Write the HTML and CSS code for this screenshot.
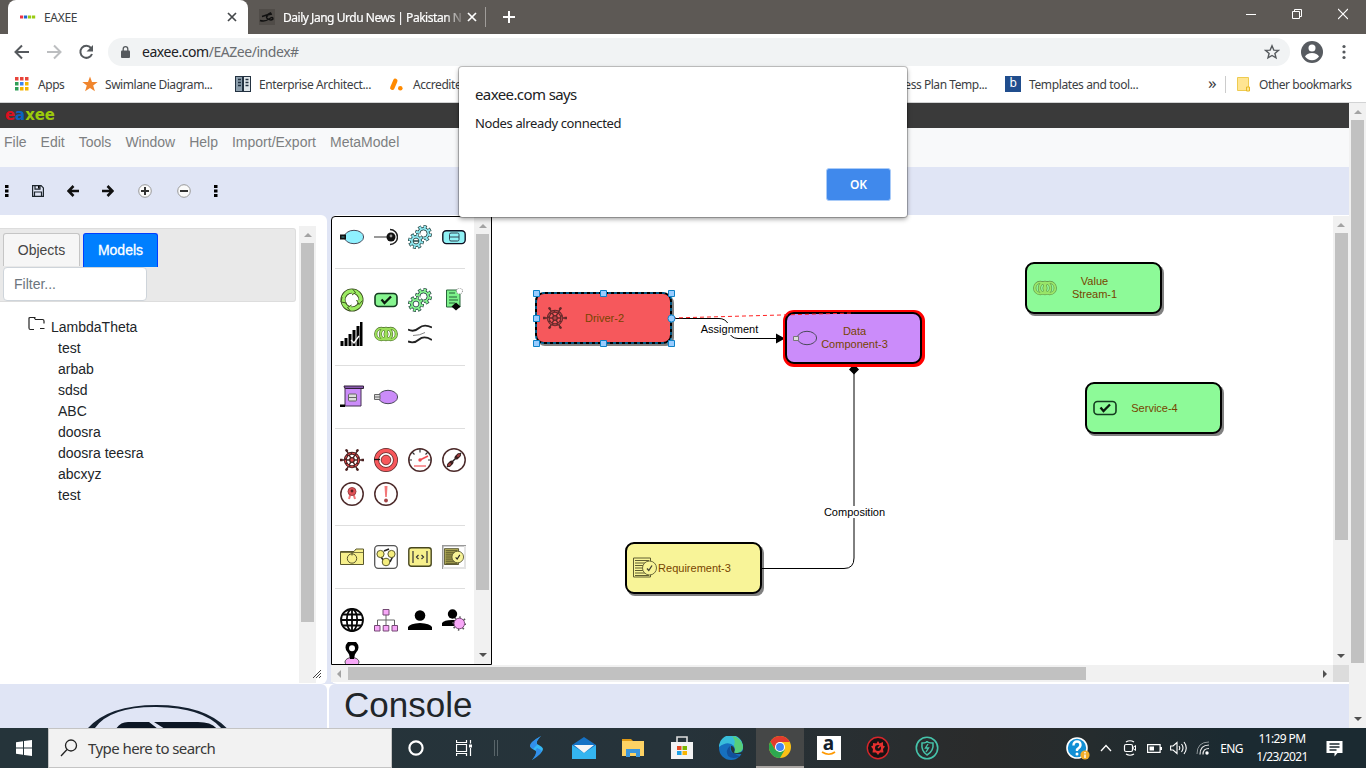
FILE: index.html
```html
<!DOCTYPE html>
<html lang="en">
<head>
<meta charset="utf-8">
<title>EAXEE</title>
<link rel="stylesheet" href="styles.css">
</head>
<body>
<svg class="defs" width="0" height="0">
  <defs>
    <symbol id="gears" viewBox="0 0 24 24">
      <g fill="none">
        <circle cx="15.500" cy="8.500" r="6.800" pathLength="80" stroke="#2b4a48" stroke-width="3.400" stroke-dasharray="6 4"/>
        <circle cx="15.500" cy="8.500" r="6" fill="currentColor" stroke="#2b4a48" stroke-width="1"/>
        <circle cx="15.500" cy="8.500" r="6.400" pathLength="80" stroke="currentColor" stroke-width="2.600" stroke-dasharray="4 6" stroke-dashoffset="-1"/>
        <circle cx="15.500" cy="8.500" r="3.600" fill="#fff" stroke="#2b4a48" stroke-width=".9"/>
        <circle cx="8" cy="16" r="8.200" fill="#fff" stroke="none"/>
        <circle cx="8" cy="16" r="6.300" pathLength="80" stroke="#2b4a48" stroke-width="3.400" stroke-dasharray="6 4"/>
        <circle cx="8" cy="16" r="5.500" fill="currentColor" stroke="#2b4a48" stroke-width="1"/>
        <circle cx="8" cy="16" r="5.900" pathLength="80" stroke="currentColor" stroke-width="2.600" stroke-dasharray="4 6" stroke-dashoffset="-1"/>
        <circle cx="8" cy="16" r="2.900" fill="#fff" stroke="#2b4a48" stroke-width=".9"/>
      </g>
    </symbol>
    <symbol id="capsule" viewBox="0 0 24 24">
      <ellipse cx="14" cy="12" rx="9.600" ry="6.700" fill="currentColor" stroke="#4a4a5a"/>
    </symbol>
    <symbol id="wheel" viewBox="0 0 24 24">
      <g fill="none" stroke="#4a2222">
        <path d="M0 12h24M6 1.500l12 21M18 1.500l-12 21" stroke-width="1.500"/>
        <path d="M0 12h2.500M21.500 12H24M6 1.500l1.300 2.200M18 22.500l-1.300-2.200M18 1.500l-1.300 2.200M6 22.500l1.300-2.200" stroke-width="2.400"/>
        <circle cx="12" cy="12" r="6.700" stroke-width="3"/>
        <circle cx="12" cy="12" r="6.700" stroke="currentColor" stroke-width="1.100" stroke-dasharray="3 1.500"/>
        <circle cx="12" cy="12" r="2.300" fill="currentColor" stroke-width="1.300"/>
      </g>
    </symbol>
    <symbol id="service" viewBox="0 0 24 24">
      <rect x="1" y="5.500" width="22" height="13" rx="3.500" fill="currentColor" stroke="#143c20" stroke-width="1.600"/>
      <path d="M7.500 11.500l3 3.500 6.500-6.500" fill="none" stroke="#0b1a0e" stroke-width="2.300"/>
    </symbol>
    <symbol id="rings" viewBox="0 0 24 24">
      <g fill="none" stroke="#507030" stroke-width="3.200"><circle cx="7.300" cy="12" r="5.600"/><circle cx="12" cy="12" r="5.600"/><circle cx="16.700" cy="12" r="5.600"/></g>
      <g fill="none" stroke="#9de05a" stroke-width="1.900"><circle cx="7.300" cy="12" r="5.600"/><circle cx="12" cy="12" r="5.600"/><circle cx="16.700" cy="12" r="5.600"/></g>
    </symbol>
    <symbol id="requirement" viewBox="0 0 24 24">
      <path d="M.5 2h17v19H.5z" fill="currentColor" stroke="#44421f" stroke-width="1"/>
      <path d="M2 4.500h14M2 7h12M2 9.500h9M2 12h8M2 14.500h9M2 17h11M2 19.500h14" stroke="#44421f" stroke-width="1.100"/>
      <circle cx="16.500" cy="12" r="7" fill="#f7f397" stroke="#55532c"/>
      <path d="M14 12.500l1.800 2 3.200-5" fill="none" stroke="#222" stroke-width="1.300"/>
    </symbol>
  </defs>
</svg>

<header class="tabstrip">
  <div class="tab active">
    <svg width="16" height="16"><g stroke-width="3" stroke-dasharray="3.200 .8"><path d="M0 8h4" stroke="#e34"/><path d="M4 8h4" stroke="#26c"/><path d="M8 8h8" stroke="#9c1"/></g></svg>
    <span class="tab-title">EAXEE</span>
    <svg class="close" width="10" height="10"><path d="M1 1l8 8M9 1L1 9" stroke="#45484b" stroke-width="1.700"/></svg>
  </div>
  <div class="tab">
    <svg width="16" height="16"><path fill="#504c48" d="M0 0h16v16H0z"/><path d="M1 11.500q5 1.500 9-1.500 4-3 4 0-2 2-5 0-3-2 0-3.500M3 7.500q5-1 9-4M8 6l5-1" fill="none" stroke="#111" stroke-width="1.400"/></svg>
    <span class="tab-title fade">Daily Jang Urdu News | Pakistan N</span>
    <svg class="close" width="10" height="10"><path d="M1 1l8 8M9 1L1 9" stroke="#fff" stroke-width="1.700"/></svg>
  </div>
  <svg class="newtab" width="12" height="12"><path d="M6 0v12M0 6h12" stroke="#fff" stroke-width="2"/></svg>
  <div class="winctl">
    <svg width="10" height="12"><path d="M0 6.500h10" stroke="#fff"/></svg>
    <svg width="10" height="12"><path d="M.5 3.500h7v7h-7zM2.500 3.500v-2h7v7h-2" fill="none" stroke="#fff"/></svg>
    <svg width="10" height="12"><path d="M0 1l10 10M10 1L0 11" stroke="#fff" stroke-width="1.100"/></svg>
  </div>
</header>

<div class="navbar">
  <svg width="16" height="16"><path d="M15 8H2M8 1.500L1.500 8 8 14.500" fill="none" stroke="#55595d" stroke-width="2"/></svg>
  <svg width="16" height="16"><path d="M1 8h13M8 1.500L14.500 8 8 14.500" fill="none" stroke="#bcbec0" stroke-width="2"/></svg>
  <svg width="16" height="16"><path d="M13 4A6 6 0 1 0 14 10" fill="none" stroke="#55595d" stroke-width="2"/><path d="M15 1v6.500H8.500z" fill="#55595d"/></svg>
  <div class="omnibox">
    <svg width="10" height="12"><path d="M1 4.500h7q1 0 1 1V11q0 1-1 1H1q-1 0-1-1V5.500q0-1 1-1z" fill="#55595d"/><path d="M2.200 5V3a2.300 2.300 0 0 1 4.600 0v2" fill="none" stroke="#55595d" stroke-width="1.300"/></svg>
    <span class="url"><b>eaxee.com</b>/EAZee/index#</span>
    <svg width="16" height="16"><path d="M8 1.800l1.800 4.300 4.600.3-3.500 3 1.100 4.500L8 11.500 4 13.900l1.100-4.500-3.500-3 4.600-.3z" fill="none" stroke="#55595d" stroke-width="1.400"/></svg>
  </div>
  <svg width="22" height="22"><circle cx="11" cy="11" r="11" fill="#575b60"/><circle cx="11" cy="7" r="3.500" fill="#fff"/><path d="M4 15.500Q6 12 11 12t7 3.500q-2.500 3.700-7 3.700t-7-3.700z" fill="#fff"/></svg>
  <svg width="4" height="16"><g fill="#55595d"><circle cx="2" cy="2.500" r="1.600"/><circle cx="2" cy="8" r="1.600"/><circle cx="2" cy="13.500" r="1.600"/></g></svg>
</div>

<div class="bookmarks">
  <svg width="14" height="14"><path fill="#e8443a" d="M0 0h3.500v3.500H0zM5 0h3.500v3.500H5zM10 0h3.500v3.500H10z"/><path fill="#2f9e57" d="M0 5h3.500v3.500H0zM0 10h3.500v3.500H0z"/><path fill="#3d85f0" d="M5 5h3.500v3.500H5z"/><path fill="#f5b400" d="M10 5h3.500v3.500H10zM5 10h3.500v3.500H5zM10 10h3.500v3.500H10z"/></svg>
  <span>Apps</span>
  <svg width="16" height="16"><path d="M8 .5l2 5.500h5.700l-4.500 3.500 1.700 5.800L8 12l-4.900 3.300 1.700-5.800L.3 6H6z" fill="#f0852d"/></svg>
  <span>Swimlane Diagram...</span>
  <svg width="16" height="16"><path fill="#233241" d="M0 0h16v16H0z"/><path fill="#8d9fad" d="M1 1h6v14H1z"/><path fill="#dfe6ea" d="M9 1h6v14H9z"/><path d="M3 3.500h3M3 6.500h3M3 9.500h3M10.500 3.500h3M10.500 6.500h3M10.500 9.500h3" stroke="#233241" stroke-width="1.400"/></svg>
  <span class="t3">Enterprise Architect...</span>
  <svg width="15" height="15"><path d="M6.300 3.800L3.300 10.800" stroke="#ff8a00" stroke-width="4.400" stroke-linecap="round"/><circle cx="11.300" cy="11.300" r="2.300" fill="#ff8a00"/></svg>
  <span>Accredited</span>
  <span class="end">ess Plan Temp...</span>
  <span class="bsq">b</span>
  <span class="t6">Templates and tool...</span>
  <span class="more">»</span>
  <svg width="14" height="16"><path d="M.5 1.500h11v13H.5z" fill="#ffe592" stroke="#eecb50"/><path d="M9.500 11h3v4h-3z" fill="#ffe592" stroke="#e8b923"/></svg>
  <span>Other bookmarks</span>
</div>

<div class="viewport">
  <main class="page">
    <div class="brand">
      <svg width="52" height="20"><text x="0" y="14.500" textLength="50" lengthAdjust="spacingAndGlyphs"><tspan fill="#dc1020">e</tspan><tspan fill="#0b62bf">a</tspan><tspan fill="#9bca0b">xee</tspan></text></svg>
    </div>
    <nav class="menu"><span>File</span><span>Edit</span><span>Tools</span><span>Window</span><span>Help</span><span>Import/Export</span><span>MetaModel</span></nav>
    <div class="tools">
      <svg width="4" height="12"><path d="M0 0h3.500v3H0zM0 4.500h3.500v3H0zM0 9h3.500v3H0z"/></svg>
      <svg width="12" height="12"><path d="M.6.6h8.500l2.300 2.300v8.500H.6zM3 .6v3.600h5V.6M2.500 11.400V7h7v4.400" fill="none" stroke="#1d252c" stroke-width="1.200"/><path d="M6 1h1.500v2.500H6z"/></svg>
      <svg width="12" height="12"><path d="M12 6H2M6.500 1L1.500 6l5 5" fill="none" stroke="#111" stroke-width="2.600"/></svg>
      <svg width="12" height="12"><path d="M0 6h10M5.500 1l5 5-5 5" fill="none" stroke="#111" stroke-width="2.600"/></svg>
      <svg width="14" height="14"><circle cx="7" cy="7" r="6.300" fill="#fafafa" stroke="#999"/><path d="M7 3v8M3 7h8" stroke="#333" stroke-width="2"/></svg>
      <svg width="14" height="14"><circle cx="7" cy="7" r="6.300" fill="#fafafa" stroke="#999"/><path d="M3 7h8" stroke="#333" stroke-width="2"/></svg>
      <svg width="4" height="12"><path d="M0 0h3.500v3H0zM0 4.500h3.500v3H0zM0 9h3.500v3H0z"/></svg>
    </div>

    <div class="work">
      <section class="left">
        <div class="explorer">
          <div class="tabsbox">
            <div class="jtabs"><span class="jtab">Objects</span><span class="jtab on">Models</span></div>
            <div class="filter">Filter...</div>
          </div>
          <div class="root">
            <svg width="18" height="16"><path d="M6 13.500H2.500q-1.500 0-1.500-1.500V2.500q0-1 1-1h4l1.500 2h7q1.500 0 1.500 1.500v2.500M1.500 1.500h6M12 12.500h4.500" fill="none" stroke="#222" stroke-width="1.200"/></svg>
            <span>LambdaTheta</span>
          </div>
          <ul class="tree"><li>test</li><li>arbab</li><li>sdsd</li><li>ABC</li><li>doosra</li><li>doosra teesra</li><li>abcxyz</li><li>test</li></ul>
        </div>
        <div class="sbar sb-left"><i class="up"></i><b></b></div>
        <svg class="grip" width="8" height="8"><path d="M0 8l8-8M3 8l5-5M6 8l2-2" stroke="#444"/></svg>
      </section>

      <section class="right">
        <div class="stage">
          <div class="palette">
            <div class="icons">
              <div class="group first">
                <svg viewBox="0 0 24 24" color="#8ff1ff"><use href="#capsule"/><path d="M0 9.500h6v5H0z" fill="#111"/><path d="M1.500 12h3" stroke="#4a9aa0"/></svg>
                <svg viewBox="0 0 24 24"><path d="M0 12h13" stroke="#777" stroke-width="1.500"/><circle cx="17" cy="12" r="4.500" fill="#111"/><circle cx="17" cy="11" r="1.400" fill="#999"/><path d="M16 4.500a7.500 7.500 0 0 1 0 15" fill="none" stroke="#222" stroke-width="1.500"/></svg>
                <svg viewBox="0 0 24 24" color="#8fe9f2"><use href="#gears"/><path d="M5 16h6" stroke="#244" stroke-width="1.500"/></svg>
                <svg viewBox="0 0 24 24"><rect x=".8" y="5.800" width="22.400" height="12.800" rx="3.500" fill="#8ff1f5" stroke="#112" stroke-width="1.400"/><rect x="7.500" y="8" width="9.500" height="8" rx="1.500" fill="#8ff1f5" stroke="#345"/><path d="M7 12h10" stroke="#345"/></svg>
              </div>
              <div class="group">
                <svg viewBox="0 0 24 24"><circle cx="12" cy="12" r="9" fill="none" stroke="#35471b" stroke-width="5"/><circle cx="12" cy="12" r="9" fill="none" stroke="#9ceb62" stroke-width="3.400"/><path d="M12.500 1l3 3.500-3.500 2.500M22.500 12.500l-3.500 4-2.500-4.500M2 9l-1 5 5.500 1M10.500 23l-3-3.500 4-2.500" fill="#9ceb62" stroke="#35471b" stroke-width=".9"/></svg>
                <svg viewBox="0 0 24 24" color="#86f58f"><use href="#service"/></svg>
                <svg viewBox="0 0 24 24" color="#86f58f"><use href="#gears"/></svg>
                <svg viewBox="0 0 24 24"><path d="M4.500 2h13.500v17H4.500z" fill="#7df18a" stroke="#28663a"/><path d="M7 5h6M7 9h8M7 12h9M7 15h6" stroke="#246036"/><circle cx="17.500" cy="3" r="3" fill="#fff" stroke="#777" stroke-dasharray="1 1"/><path d="M9.500 18.500l4.500-4 4.500 4-4.500 4z" fill="#080808"/></svg>
                <svg viewBox="0 0 24 24"><path d="M.5 19h3v5h-3zM4.500 16h3v8h-3zM8.500 12h3v12h-3zM12.500 8h3v16h-3zM16.500 4h3v20h-3zM20 0h2.500v24H20z"/><path d="M11 18l3 3 5-7" fill="none" stroke="#fff" stroke-width="1.400"/></svg>
                <svg viewBox="0 0 24 24"><use href="#rings"/></svg>
                <svg viewBox="0 0 24 24"><path d="M0 7.500Q6 10.500 11 6T24 5.500M0 19.500Q6 22 11 17.500T24 18" fill="none" stroke="#222" stroke-width="1.900"/><path d="M5 13.500q7 0 12-3" fill="none" stroke="#777" stroke-width=".9"/></svg>
              </div>
              <div class="group">
                <svg viewBox="0 0 24 24"><path d="M5 3h16v18H5z" fill="#cb8cf9" stroke="#423050"/><path d="M4 1h19.500v2.500H6q-2 0-2-2.500z" fill="#8a5ab0" stroke="#302038"/><path d="M0 19.500h5V22H0z"/><rect x="8.500" y="9" width="8" height="7" rx="1" fill="#ddd" stroke="#666"/><path d="M8.500 12.500h8" stroke="#666"/></svg>
                <svg viewBox="0 0 24 24" color="#cb8cf9"><use href="#capsule"/><path d="M.5 9.500h5.500v5H.5zM1 12h5" fill="#ddd" stroke="#666"/></svg>
              </div>
              <div class="group">
                <svg viewBox="0 0 24 24" color="#e4494b"><use href="#wheel"/></svg>
                <svg viewBox="0 0 24 24"><circle cx="12" cy="12" r="9.500" fill="#fff" stroke="#5a2a2a" stroke-width="5"/><circle cx="12" cy="12" r="9.500" fill="none" stroke="#f7575b" stroke-width="3.500"/><circle cx="12" cy="12" r="4.800" fill="#f7575b" stroke="#7b3333"/><path d="M0 11.500h6" stroke="#111" stroke-width="1.300"/></svg>
                <svg viewBox="0 0 24 24"><circle cx="12" cy="12" r="11.200" fill="#fff" stroke="#4c2a2a" stroke-width="1.500"/><path d="M12 1v3.500M1 12h3M23 12h-3M4 4l2.500 2.500M20 4l-2.500 2.500" stroke="#333" stroke-width="1.200"/><path d="M6 18h12" stroke="#f7777b" stroke-width="1.500"/><path d="M12 12l8-4" stroke="#f04b50" stroke-width="1.600"/><circle cx="12" cy="12" r="1.700" fill="#f04b50"/></svg>
                <svg viewBox="0 0 24 24"><circle cx="12" cy="12" r="11.200" fill="#fff" stroke="#4c2a2a" stroke-width="1.500"/><path d="M5 19L19 5" stroke="#222" stroke-width="1.500"/><path d="M7 17l2.500-2.500M14.500 9.500L17 7" stroke="#3b2020" stroke-width="4" stroke-linecap="round"/><path d="M7 17l1-1M16 8l1-1" stroke="#a84040" stroke-width="2" stroke-linecap="round"/></svg>
                <svg viewBox="0 0 24 24"><circle cx="12" cy="12" r="11.200" fill="#fff" stroke="#4c2a2a" stroke-width="1.500"/><path d="M10.500 12l-1.500 5M13.500 12l1.500 5" stroke="#f37779" stroke-width="2"/><circle cx="12" cy="9.500" r="4" fill="#e35256" stroke="#9c4144"/><circle cx="12" cy="9" r="1.400" fill="#5a2325"/></svg>
                <svg viewBox="0 0 24 24"><circle cx="12" cy="12" r="11.200" fill="#fff" stroke="#4c2a2a" stroke-width="1.500"/><path d="M10.500 4h3l-.7 11h-1.600z" fill="#f37779"/><circle cx="12" cy="18.500" r="1.900" fill="#a54447"/></svg>
              </div>
              <div class="group">
                <svg viewBox="0 0 24 24"><path d="M.5 19.500v-13H14l2-2.500h7.500v15.500z" fill="#f7f08c" stroke="#5a582e"/><path d="M.5 7.500h23" stroke="#5a582e" stroke-width=".8"/><circle cx="12" cy="13.500" r="4.700" fill="#f7f08c" stroke="#5a582e"/><path d="M12 6.500v4" stroke="#5a582e"/></svg>
                <svg viewBox="0 0 24 24"><rect x=".7" y=".7" width="22.600" height="22.600" rx="3.500" fill="#fff" stroke="#555" stroke-width="1.300"/><path d="M10 6l5-2M19 11l-3 6M7 12l3 4" stroke="#222" stroke-width="1.600"/><g fill="#f5ee7e" stroke="#5a582e"><circle cx="6.500" cy="9" r="3.600"/><circle cx="17.500" cy="9" r="3.600"/><circle cx="12" cy="17" r="3.800"/></g></svg>
                <svg viewBox="0 0 24 24"><rect x=".8" y="2.800" width="22.400" height="18.400" rx="2.500" fill="#f7f08c" stroke="#47461f" stroke-width="1.400"/><path d="M5 6v12M19 6v12M10.500 10l-2 2 2 2M13.500 10l2 2-2 2" fill="none" stroke="#333" stroke-width="1.200"/></svg>
                <svg viewBox="0 0 24 24" color="#b8b25a"><path d="M0 24V0h24v1.500H1.500V24z" fill="#999"/><path d="M23 1v22H1" fill="none" stroke="#e4e4e4" stroke-width="2"/><svg x="2" y="2" width="20" height="20" viewBox="0 0 24 24"><use href="#requirement"/></svg></svg>
              </div>
              <div class="group">
                <svg viewBox="0 0 24 24"><g fill="none" stroke="#080808" stroke-width="1.800"><circle cx="12" cy="12" r="11"/><ellipse cx="12" cy="12" rx="5.200" ry="11"/><path d="M12 1v22M1 12h22M3 6.500h18M3 17.500h18"/></g></svg>
                <svg viewBox="0 0 24 24"><path d="M12 6v6M3.500 17v-5h17v5M12 12v5" fill="none" stroke="#666"/><g fill="#f7a7f7" stroke="#744974"><path d="M9 1.500h6V7H9zM.5 17.500H6V23H.5zM9.200 17.500h5.600V23H9.200zM18 17.500h5.500V23H18z"/></g></svg>
                <svg viewBox="0 0 24 24"><circle cx="12" cy="7.500" r="5.300"/><path d="M0 22v-3q2-3.500 12-4 10 .5 12 4v3z"/></svg>
                <svg viewBox="0 0 24 24"><circle cx="10.500" cy="6" r="4.700"/><path d="M0 18v-3q2-3 10-3h5v6z"/><circle cx="17.300" cy="15.500" r="6.300" pathLength="80" fill="none" stroke="#555" stroke-width="2" stroke-dasharray="3 7"/><circle cx="17.300" cy="15.500" r="5.300" fill="#f7a7f7" stroke="#7b4a7b"/></svg>
                <svg viewBox="0 0 24 24"><ellipse cx="12" cy="20" rx="7" ry="4.500" fill="#f7a7f7" stroke="#555"/><path d="M12 17L7.500 10A6.500 6.500 0 1 1 16.500 10zM9 12h6l-1 5h-4z"/><circle cx="12" cy="6.300" r="3" fill="#fff"/></svg>
              </div>
            </div>
            <div class="sbar sb-pal"><i class="up"></i><b></b><i class="down"></i></div>
          </div>

          <svg class="canvas" width="841" height="449" viewBox="492 216 841 449">
            <g fill="#808080">
              <rect x="537" y="295" width="137" height="51" rx="8"/>
              <rect x="1027" y="265" width="137" height="51" rx="8"/>
              <rect x="1087" y="385" width="137" height="51" rx="8"/>
              <rect x="627" y="545" width="137" height="51" rx="8"/>
            </g>
            <g fill="none" stroke="#000">
              <path d="M672 318.500H719Q725 318.500 728 323.500V329Q730 338.500 738 338.500H780"/>
              <path d="M854 368V558Q854 568.500 844 568.500H762"/>
            </g>
            <path d="M776 333.500v10l9-5zM854 364l5 5.500-5 5-5-5z"/>
            <g fill="#fff"><path d="M699 323h61v12h-61zM822 506h65v12h-65z"/></g>
            <g stroke="#000" stroke-width="2">
              <rect x="536" y="293" width="135" height="50" rx="8" fill="#f6585c"/>
              <rect x="1026" y="263" width="135" height="50" rx="8" fill="#8dfa98"/>
              <rect x="1086" y="383" width="135" height="50" rx="8" fill="#8dfa98"/>
              <rect x="626" y="543" width="135" height="50" rx="8" fill="#f8f498"/>
              <rect x="785" y="312" width="138" height="53" rx="9" fill="#f00" stroke="#f00" stroke-width="4"/>
              <rect x="786" y="313" width="135" height="50" rx="8" fill="#cb8cfa"/>
            </g>
            <rect x="536" y="293" width="135" height="50" fill="none" stroke="#00a8ff" stroke-dasharray="3 3"/>
            <path d="M672 318L854 313" stroke="#f22" stroke-dasharray="4 3"/>
            <g fill="#99ccff" stroke="#0e83c7">
              <path d="M533.500 290.500h6v6h-6zM600.500 290.500h6v6h-6zM668.500 290.500h6v6h-6zM533.500 315.500h6v6h-6zM533.500 340.500h6v6h-6zM600.500 340.500h6v6h-6zM668.500 340.500h6v6h-6z"/>
              <circle cx="671.500" cy="318.500" r="3.500"/>
            </g>
            <g color="#b04045" opacity=".85"><use href="#wheel" x="543" y="306" width="24" height="24"/></g>
            <g opacity=".75"><use href="#rings" x="1033" y="276" width="24" height="24"/></g>
            <g color="#8dfa98"><use href="#service" x="1093" y="396" width="24" height="24"/></g>
            <g color="#f8f498" opacity=".85"><use href="#requirement" x="633" y="556" width="24" height="24"/></g>
            <g color="#cb8cfa"><use href="#capsule" x="793" y="326" width="24" height="24"/></g>
            <path d="M793.500 336.500h5v4h-5z" fill="#ddd" stroke="#777"/>
            <g class="lbl" text-anchor="middle">
              <text x="604.500" y="322">Driver-2</text>
              <text x="1094.500" y="285">Value</text><text x="1094.500" y="298">Stream-1</text>
              <text x="1154.500" y="412">Service-4</text>
              <text x="694.500" y="572">Requirement-3</text>
              <text x="854.500" y="335">Data</text><text x="854.500" y="348">Component-3</text>
              <text class="edge" x="729.500" y="333">Assignment</text>
              <text class="edge" x="854.500" y="516">Composition</text>
            </g>
          </svg>
          <div class="sbar sb-can"><i class="up"></i><b></b><i class="down"></i></div>
        </div>
        <div class="hbar"><i class="lt"></i><b></b><i class="rt"></i></div>
      </section>
    </div>

    <div class="foot">
      <div class="logo"><svg width="160" height="44" viewBox="76 684 160 44"><path d="M84 733Q104 705 156.500 705T231 733L225 733Q208 707.500 156.500 707T92 733z" fill="#14202f"/><path d="M116 729q4-7 12-7h21l9 7zM154 722h44q14 0 19 7h-52z" fill="#0c1624"/></svg></div>
      <div class="console">Console</div>
    </div>
  </main>
  <div class="sbar sb-page"><i class="up"></i><b></b><i class="down"></i></div>
</div>

<footer class="taskbar">
  <div class="start"><svg width="16" height="16"><path d="M0 2.300L7 1.300v6.200H0zM8 1.100L16 0v7.500H8zM0 8.500h7v6.200l-7-1zM8 8.500h8V16l-8-1.100z" fill="#fff"/></svg></div>
  <div class="search"><svg width="18" height="18"><circle cx="11" cy="6.500" r="5.500" fill="none" stroke="#222" stroke-width="1.300"/><path d="M7 10.500L1 17" stroke="#222" stroke-width="1.300"/></svg><span>Type here to search</span></div>
  <div class="cells">
    <svg width="16" height="16"><circle cx="8" cy="8" r="6.600" fill="none" stroke="#fff" stroke-width="2.200"/></svg>
    <svg width="16" height="16"><path d="M.5 0v2.500h10V0M.5 4.500h10v7H.5zM.5 16v-2.500h10V16M14.500 0v3.500M14.500 8v8" fill="none" stroke="#fff" stroke-width="1.200"/><path d="M13 4.500h3v3h-3z" fill="#fff"/></svg>
    <svg width="6" height="16"><path d="M1.500 0v16M4.500 0v16" stroke="#59656a"/></svg>
    <svg width="14" height="24"><path d="M12 0Q1 6 1 10q0 2 6 5 1 3-4 9 11-7 11-11 0-2-6-5-1-3 4-8z" fill="#35b9f5"/><path d="M12 0Q1 6 1 10q0 1.500 3 3 2-2 4-4-2-3 4-9zM13 15q-2-2-5-3-2 2-1 4 0 3-4 8 7-4 10-9z" fill="#2f74e4" opacity=".6"/></svg>
    <svg width="24" height="24"><path d="M0 9L12 1l12 8v14H0z" fill="#1672c4"/><path d="M0 9l12 8 12-8v14H0z" fill="#34b5f0"/><path d="M2 9h20l-10 8z" fill="#f5f5f5"/></svg>
    <svg width="24" height="24"><path d="M1 3h9l2 2H1z" fill="#e09a14"/><path d="M1 5h22v15H1z" fill="#fdd264"/><path d="M5 21v-8h14v8h-4v-4H9v4z" fill="#3b96dd"/></svg>
    <svg width="24" height="24"><path d="M7 6V1h10v5" fill="none" stroke="#ddd" stroke-width="1.600"/><path d="M1 6h22v17H1z" fill="#f3f3f3"/><path d="M7 10h4.500v4H7z" fill="#e64b25"/><path d="M12.500 10H17v4h-4.500z" fill="#7db700"/><path d="M7 15h4.500v4H7z" fill="#1ba0e6"/><path d="M12.500 15H17v4h-4.500z" fill="#f8b500"/></svg>
    <svg width="24" height="24"><circle cx="12" cy="12" r="12" fill="#1670bf"/><path d="M0 11A12 12 0 0 1 24 11Q24 16 18 17H15Q17 13 15 10 9 4 0 11z" fill="#38bdda"/><path d="M13 0A12 12 0 0 1 24 11Q24 16 18 17H15Q17 13 15 10 17 4 13 0z" fill="#56cf7a"/><path d="M15 17q-5 0-4-7-5 4-2 10 5 4 13 0-3 1-7-3z" fill="#12519c"/><path d="M12 10q-1.500 7 6 8h5l1-3q-4 3-9 1.500 2-4-2-6.500z" fill="#263338"/></svg>
    <div class="hot"><svg width="22" height="22" viewBox="0 0 24 24"><circle cx="12" cy="12" r="12" fill="#fbc116"/><path d="M1.600 6A12 12 0 0 0 12 24l5.200-9L12 12 6.800 15z" fill="#2da94f"/><path d="M12 6.500H22.600L22.400 6A12 12 0 0 0 1.600 6L6.800 15z" fill="#e33b2e"/><circle cx="12" cy="12" r="5.500" fill="#fff"/><circle cx="12" cy="12" r="4.300" fill="#4285f4"/></svg></div>
    <div class="amazon">a<svg width="16" height="5"><path d="M1 1q7 4.500 13 0" fill="none" stroke="#f90" stroke-width="1.700"/></svg></div>
    <svg width="24" height="24"><circle cx="12" cy="12" r="10.700" fill="#171314" stroke="#d7262b" stroke-width="1.400"/><path d="M12 5l1.500 2.500L17 6v3.500l2 1-2 2.500.5 3.500H14L12 19l-2-2.500H6.500L7 13l-2-2.500 2-1V7l3.500.5z" fill="#e5302f"/><circle cx="12" cy="12" r="3" fill="#171314"/><path d="M12 12l3-3" stroke="#e5302f" stroke-width="1.500"/></svg>
    <svg width="24" height="24"><circle cx="12" cy="12" r="10.700" fill="none" stroke="#46c4ab" stroke-width="1.600"/><path d="M7 7q5 0 5-2 0 2 6 2 1 8-6 12-6-4-5-12z" fill="none" stroke="#46c4ab" stroke-width="1.500"/><path d="M13 8l-2.500 4h3L11 16" fill="none" stroke="#46c4ab" stroke-width="1.400"/></svg>
  </div>
  <div class="tray">
    <svg width="24" height="24"><circle cx="11" cy="12" r="10" fill="#118fd5" stroke="#fff" stroke-width="1.600"/><path d="M7.500 9.500q0-4 3.500-4t3.500 3.500q0 2-3.500 4.500v1.500" fill="none" stroke="#fff" stroke-width="2.400"/><circle cx="11" cy="18" r="1.500" fill="#fff"/><circle cx="19" cy="19" r="4.600" fill="#f3ae2b"/><path d="M19 16v1.500M19 18.500v3.500" stroke="#fff" stroke-width="1.400"/></svg>
    <svg width="12" height="8"><path d="M1 7l5-5.500L11 7" fill="none" stroke="#fff" stroke-width="1.300"/></svg>
    <svg width="14" height="16"><path d="M3 2q4-2.500 8 0M3 14q4 2.500 8 0" fill="none" stroke="#fff" stroke-width="1.200"/><rect x="1.500" y="4.500" width="8" height="7" rx="1.500" fill="none" stroke="#fff" stroke-width="1.200"/><path d="M9.500 8l3-2.500v5z" fill="none" stroke="#fff"/></svg>
    <svg width="15" height="9"><path d="M.6.600h12.500v7.800H.6z" fill="none" stroke="#fff" stroke-width="1.200"/><path d="M2.500 2.500H7v4H2.500zM13 3h2v3h-2z" fill="#fff"/></svg>
    <svg width="17" height="14"><path d="M.6 5h2.500L7 1.500v11L3.100 9H.6zM9 5q1.500 2 0 4M11.500 3q3 4 0 8M14 1q4.500 6 0 12" fill="none" stroke="#fff" stroke-width="1.100"/></svg>
    <svg width="14" height="14"><g fill="none" stroke="#e8e8e8" stroke-width="1.200"><path d="M4 13.500Q4 4 13 4M7 13.500Q7 7.500 13 7.500"/></g><path d="M1 13Q1 1 13 1" fill="none" stroke="#8d9598"/><circle cx="11" cy="12" r="1.700" fill="#fff"/></svg>
    <span class="lang">ENG</span>
    <span class="clock"><span>11:29 PM</span><span>1/23/2021</span></span>
    <svg width="17" height="17"><path d="M.5 1h16v12h-5l-3 3.500V13h-8z" fill="#fff"/><path d="M3.500 4h10M3.500 7h10M3.500 10h7" stroke="#1d2a30" stroke-width="1.300"/></svg>
  </div>
</footer>

<div class="dialog" role="dialog">
  <h1>eaxee.com says</h1>
  <p>Nodes already connected</p>
  <button>OK</button>
</div>
</body>
</html>
```
FILE: styles.css
```css
* { box-sizing: border-box; }
body {
  margin: 0; width: 1366px; height: 768px; overflow: hidden; position: relative;
  display: flex; flex-direction: column; background: #fff;
  font-family: "Noto Sans", "Open Sans", sans-serif; font-size: 12px; color: #3c4043;
}
svg { display: block; flex: none; }
.defs { position: absolute; }
span { white-space: nowrap; }

/* browser tabs */
.tabstrip { height: 34px; background: #5d5955; display: flex; align-items: center; padding-left: 8px; }
.tab { width: 240px; height: 34px; display: flex; align-items: center; color: #fff; }
.tab.active { background: #fff; color: #3c4043; border-radius: 8px 8px 0 0; padding: 0 11px 0 12px; }
.tab-title { flex: 1; margin-left: 8px; overflow: hidden; letter-spacing: -.3px; }
.tab-title.fade { letter-spacing: -.47px; margin-right: 4px; -webkit-text-stroke: .2px #fff; -webkit-mask-image: linear-gradient(90deg, #000 90%, rgba(0,0,0,.15)); }
.tab:nth-child(2) { width: 238px; padding: 0 9px 0 11px; background: linear-gradient(#a09d9a, #a09d9a) right center / 1px 20px no-repeat; }
.newtab { margin-left: 17px; }
.winctl { margin-left: auto; display: flex; gap: 36px; padding: 0 18px 6px 0; }

.navbar { height: 35px; display: flex; align-items: center; padding-left: 14px; }
.navbar > svg { margin-right: 16px; }
.navbar > svg:nth-of-type(3) { margin-right: 14px; }
.omnibox { width: 1182px; height: 28px; border-radius: 14px; background: #f1f3f4; display: flex; align-items: center; padding: 0 10px 0 13px; margin: 0 11px 0 0; }
.url { flex: 1; margin-left: 11px; font-size: 14px; color: #6a6d71; letter-spacing: -.45px; }
.url b { font-weight: 400; color: #202124; }
.navbar > svg:nth-last-child(2) { margin-right: 19px; }
.navbar > svg:last-child { margin: 0; }

.bookmarks {
  height: 34px; border-bottom: 1px solid #d2d3d4; padding: 0 0 3px 15px; align-items: center; display: grid; letter-spacing: -.45px;
  grid-template-columns: 23px 44px 23px 130px 24px 130px 24px 493px 81px 42px 179px 29px 22px 100px;
}
.bookmarks .t3, .bookmarks .t6 { letter-spacing: -.38px; }
.bookmarks .end { justify-self: end; }
.bookmarks .bsq { width: 16px; height: 16px; margin-left: 18px; background: #204d8d; color: #fff; text-align: center; line-height: 14px; }
.bookmarks .more { font-size: 17px; line-height: 14px; padding-bottom: 3px; border-right: 1px solid #ccc; width: 18px; }

.viewport { height: 625px; display: flex; }
.page { width: 1349px; display: flex; flex-direction: column; font-family: "Liberation Sans", Arial, sans-serif; font-size: 14px; color: #212529; }
.brand { height: 25px; background: #3a3a3a; padding: 2px 5px; }
.brand text { font: bold 16px "DejaVu Sans", sans-serif; stroke-width: .4px; }
.menu { height: 39px; background: #f8f9fa; display: flex; gap: 14px; padding: 6px 4px; color: #7d7f81; line-height: 16px; }
.tools { height: 48px; background: #e0e5f5; display: grid; align-items: center; justify-items: start; padding: 0 0 1px 5px; grid-template-columns: 27px 35px 35px 36px 39px 37px 10px; }

.work { height: 469px; background: #e0e5f5; display: flex; gap: 4px; }
.left { width: 327px; background: #fff; border-radius: 0 6px 6px 0; display: flex; }
.explorer { width: 299px; padding-top: 13px; }
.tabsbox { width: 296px; height: 74px; background: #e9e9e9; border: 1px solid #ddd; border-left: 0; border-radius: 0 3px 3px 0; padding: 4px 3px; }
.jtabs { display: flex; gap: 3px; height: 34px; }
.jtab { border: 1px solid #c5c5c5; border-bottom: 0; border-radius: 3px 3px 0 0; background: #f6f6f6; color: #454545; width: 77px; text-align: center; line-height: 33px; height: 33px; }
.jtab.on { width: 75px; height: 34px; background: #007fff; border-color: #003eff; color: #fff; -webkit-text-stroke: .3px #fff; }
.filter { width: 144px; height: 34px; border: 1px solid #ced4da; border-radius: 4px; background: #fff; color: #6c757d; padding: 0 10px; line-height: 32px; }
.root { display: flex; padding: 14px 0 0 28px; height: 36px; gap: 5px; }
.root span { line-height: 16px; padding-top: 3px; }
.tree { list-style: none; margin: 0; padding: 0 0 0 58px; line-height: 21px; }

/* scrollbars */
.sbar { width: 17px; background: #f1f1f1; display: flex; flex-direction: column; align-items: center; flex: none; }
.sbar b, .hbar b { background: #c1c1c1; flex: none; }
.sbar b { width: 13px; }
.sbar i { width: 0; height: 0; border: 4px solid transparent; flex: none; }
.up { border-top: 0 !important; border-bottom-color: #a3a3a3 !important; margin: 7px 0 6px; }
.down { border-bottom: 0 !important; border-top-color: #505050 !important; margin: auto 0 7px; }
.sb-left { height: 457px; margin-top: 11px; }
.sb-left b { height: 379px; }
.sb-pal b { height: 356px; width: 13px; }
.sb-can b { height: 307px; }
.sb-page b { height: 543px; }
.grip { align-self: flex-end; margin: 0 0 6px -3px; }

.right { width: 1018px; background: #fff; border-radius: 6px 0 0 6px; padding-top: 1px; }
.stage { height: 449px; display: flex; }
.palette { width: 161px; height: 449px; border: 1px solid #000; border-radius: 4px 0 0 0; display: flex; overflow: hidden; }
.icons { width: 142px; padding-left: 3px; }
.group { width: 130px; border-top: 1px solid #dedede; padding: 14px 0 14px 5px; display: grid; grid-template-columns: repeat(4, 34px); grid-auto-rows: 34px; align-items: center; }
.group svg { width: 24px; height: 24px; }
.group svg svg { width: 20px; height: 20px; }
.group.first { border-top: 0; padding-top: 3px; }
.sb-can { width: 16px; }
.lbl { font: 11px "Liberation Sans", Arial, sans-serif; fill: #774400; }
.lbl .edge { fill: #000; }
.hbar { height: 17px; background: #f1f1f1; width: 1018px; display: flex; align-items: center; border-right: 16px solid #dcdcdc; }
.hbar b { height: 13px; width: 738px; }
.hbar i { border: 4px solid transparent; }
.lt { border-left: 0 !important; border-right-color: #a3a3a3 !important; margin: 0 7px 0 6px; }
.rt { border-right: 0 !important; border-left-color: #505050 !important; margin: 0 6px 0 auto; }

.foot { height: 44px; display: flex; background: #fff; gap: 2px; }
.logo { width: 327px; background: #e0e5f5; padding-left: 76px; border-radius: 0 6px 0 0; overflow: hidden; }
.console { flex: 1; background: #e0e5f5; border-radius: 6px 0 0 0; padding-left: 15px; font-size: 35px; line-height: 42px; }

.taskbar { height: 40px; display: flex; background: linear-gradient(90deg, #25343a 0, #26333a 50%, #2a2b2b 72%, #252c2e 80%, #1b2a31 90%); color: #fff; }
.start { width: 48px; display: grid; place-items: center; }
.search { width: 344px; background: #f2f2f2; border: 1px solid #c4c4c4; display: flex; align-items: center; color: #383838; font-size: 15px; letter-spacing: -.57px; padding-left: 11px; gap: 10px; }
.cells { display: grid; grid-template-columns: 48px 48px 16px 55px repeat(8, 49px); align-items: center; justify-items: center; }
.cells > svg:nth-child(4) { margin-left: 8px; }
.hot { width: 48px; height: 40px; background: #454747; border-bottom: 2px solid #aaa6a3; display: grid; place-items: center; }
.amazon { width: 24px; height: 24px; background: #fff; color: #14202b; font-weight: 700; font-size: 19px; line-height: 15px; display: flex; flex-direction: column; align-items: center; }
.tray { margin-left: auto; margin-right: 15px; display: grid; grid-template-columns: 28px 24px 24px 24px 24px 26px 31px 70px 34px; align-items: center; justify-items: center; letter-spacing: -.5px; }
.tray > svg:first-child { justify-self: start; }
.lang { letter-spacing: -.6px; }
.clock { display: flex; flex-direction: column; align-items: center; line-height: 18px; font-size: 12px; letter-spacing: -.6px; }

.dialog { position: absolute; left: 459px; top: 67px; width: 448px; height: 150px; background: #fff; border-radius: 3px; box-shadow: 0 0 0 1px rgba(0,0,0,.22), 0 2px 5px rgba(0,0,0,.4); padding: 17px 16px 16px; display: flex; flex-direction: column; color: #202124; }
.dialog h1 { margin: 0; font-size: 15px; font-weight: 400; line-height: 20px; letter-spacing: -.6px; }
.dialog p { margin: 10px 0 0; font-size: 13px; line-height: 18px; letter-spacing: -.38px; }
.dialog button { width: 65px; height: 33px; margin-top: auto; align-self: flex-end; border: 1px solid #a9cbf8; border-radius: 3px; background: #4089ec; color: #fff; font: 600 12px "Noto Sans", sans-serif; padding: 0; }
```
